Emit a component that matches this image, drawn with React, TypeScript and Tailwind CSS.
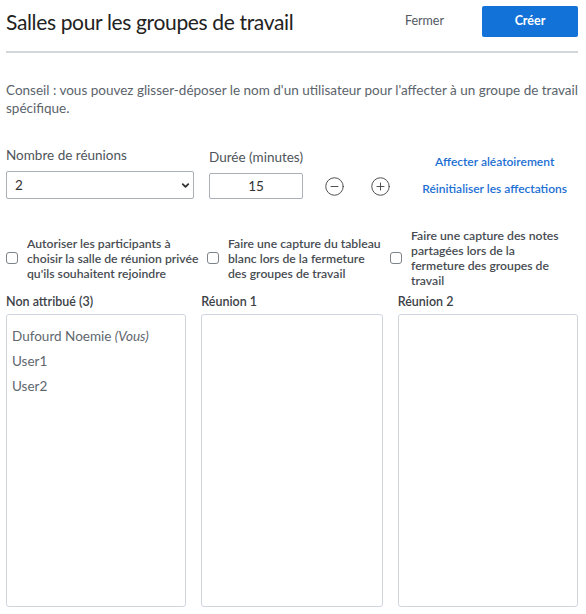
import { CircleMinus, CirclePlus, ChevronDown } from "lucide-react";

const Check = ({ lines, className }: { lines: string[]; className?: string }) => (
  <label className={`flex items-center gap-[9px] ${className ?? ""}`}>
    <span className="w-[12px] h-[12px] shrink-0 rounded-[3px] border border-[#7d8389] bg-white" />
    <span className="flex flex-col text-[12.2px] leading-[15px] font-semibold text-[#474c52] whitespace-nowrap">
      {lines.map((l, i) => (
        <span key={i}>{l}</span>
      ))}
    </span>
  </label>
);

const Column = ({ title, w, children }: { title: string; w: string; children?: React.ReactNode }) => (
  <div className={`flex flex-col ${w}`}>
    <div className="text-[12.5px] leading-[15px] font-semibold text-[#3c4147] h-[15px]">{title}</div>
    <div className="mt-[5px] h-[293px] rounded-[3px] border border-[#cdd5de] px-[5px] pt-[9px] flex flex-col">
      {children}
    </div>
  </div>
);

export default function App() {
  return (
    <div className="w-[586px] h-[614px] bg-white pl-[6px] pr-[8px] pt-[6px] font-['Lato',sans-serif]">
      <div className="flex items-center justify-between">
        <h1 className="text-[21px] leading-[31px] text-[#222] tracking-[-0.35px]">Salles pour les groupes de travail</h1>
        <div className="flex items-center">
          <button className="text-[12.5px] text-[#53595f] mr-[38px]">Fermer</button>
          <button className="w-[96px] h-[31px] rounded-[2px] bg-[#1272d8] text-white text-[12.5px] font-bold">Créer</button>
        </div>
      </div>
      <div className="mt-[14px] h-[2px] bg-[#d3d7db]" />

      <p className="mt-[28px] text-[13.5px] leading-[18px] text-[#5b636b]">
        Conseil : vous pouvez glisser-déposer le nom d'un utilisateur pour l'affecter à un groupe de travail spécifique.
      </p>

      <div className="mt-[30px] flex items-end">
        <div className="flex flex-col w-[203px]">
          <span className="text-[13.5px] leading-[17px] text-[#4e545a]">Nombre de réunions</span>
          <div className="mt-[7px] w-[188px] h-[28px] rounded-[2px] border border-[#a9b0b7] flex items-center justify-between pl-[8px] pr-[2px]">
            <span className="text-[13.5px] text-[#333]">2</span>
            <ChevronDown size={11} strokeWidth={4} className="text-[#333]" />
          </div>
        </div>
        <div className="flex flex-col">
          <span className="text-[13.5px] leading-[17px] text-[#4e545a]">Durée (minutes)</span>
          <div className="mt-[7px] w-[94px] h-[26px] rounded-[2px] border border-[#a9b0b7] flex items-center justify-center text-[13.5px] text-[#333]">
            15
          </div>
        </div>
        <div className="flex items-center gap-[25px] ml-[21px] h-[26px]">
          <CircleMinus size={21} strokeWidth={1.1} className="text-[#4a4a4a]" />
          <CirclePlus size={21} strokeWidth={1.1} className="text-[#4a4a4a]" />
        </div>
        <div className="flex flex-col items-center ml-auto mr-[11px] gap-[10px] pb-[2px]">
          <a className="text-[12px] leading-[17px] font-semibold text-[#1c6fd3]">Affecter aléatoirement</a>
          <a className="text-[12px] leading-[17px] font-semibold text-[#1c6fd3]">Réinitialiser les affectations</a>
        </div>
      </div>

      <div className="mt-[29px] flex items-center">
        <Check
          className="w-[201px] shrink-0"
          lines={["Autoriser les participants à", "choisir la salle de réunion privée", "qu'ils souhaitent rejoindre"]}
        />
        <Check
          className="w-[183px] shrink-0"
          lines={["Faire une capture du tableau", "blanc lors de la fermeture", "des groupes de travail"]}
        />
        <Check
          className="flex-1"
          lines={["Faire une capture des notes", "partagées lors de la", "fermeture des groupes de", "travail"]}
        />
      </div>

      <div className="mt-[6px] flex gap-[15px]">
        <Column title="Non attribué (3)" w="w-[181px]">
          <span className="text-[13.5px] leading-[25px] text-[#60676e]">
            Dufourd Noemie <i>(Vous)</i>
          </span>
          <span className="text-[13.5px] leading-[25px] text-[#60676e]">User1</span>
          <span className="text-[13.5px] leading-[25px] text-[#60676e]">User2</span>
        </Column>
        <Column title="Réunion 1" w="w-[182px]" />
        <Column title="Réunion 2" w="w-[181px]" />
      </div>
    </div>
  );
}
